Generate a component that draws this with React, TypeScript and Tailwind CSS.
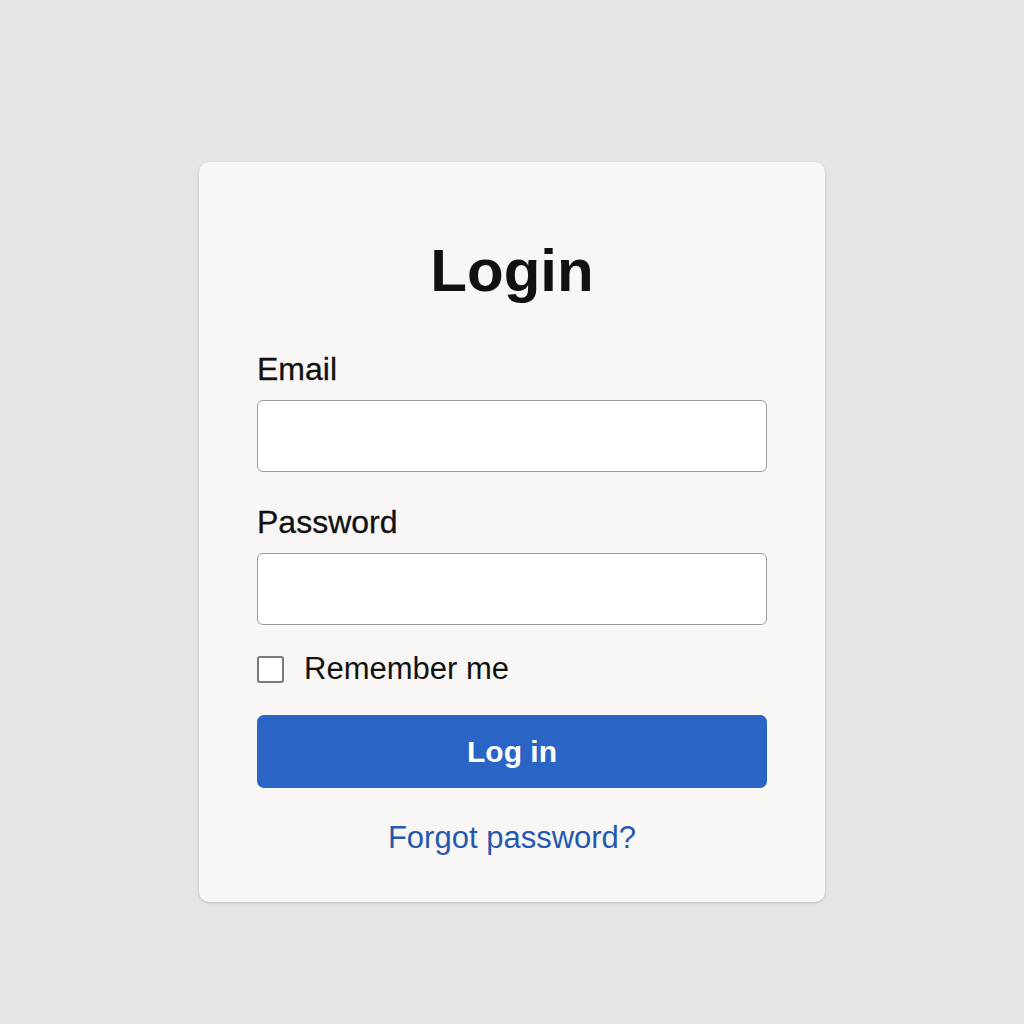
export default function App() {
  return (
    <div
      className="min-h-screen w-full bg-[#e6e5e3] flex justify-center pt-[162px]"
      style={{ fontFamily: '"Liberation Sans", Arial, sans-serif' }}
    >
      <div className="w-[626px] h-[740px] bg-[#f8f7f6] rounded-[10px] shadow-[0_1px_3px_rgba(0,0,0,0.18)] px-[58px] pt-[79px] flex flex-col">
        <h1 className="text-center text-[60px] leading-[60px] font-bold text-[#111]">Login</h1>

        <label className="mt-[50px] text-[32px] leading-[36px] text-[#111] [-webkit-text-stroke:0.3px_#111]">Email</label>
        <input
          type="email"
          className="mt-[13px] h-[72px] w-full bg-white border border-[#9a9a9a] rounded-[6px] px-4 text-[24px] outline-none"
        />

        <label className="mt-[32px] text-[32px] leading-[36px] text-[#111] [-webkit-text-stroke:0.3px_#111]">Password</label>
        <input
          type="password"
          className="mt-[13px] h-[72px] w-full bg-white border border-[#9a9a9a] rounded-[6px] px-4 text-[24px] outline-none"
        />

        <div className="mt-[27px] h-[34px] flex items-center gap-[20px]">
          <span className="w-[27px] h-[27px] border-2 border-[#7a7a7a] rounded-[3px] bg-white shrink-0" />
          <span className="text-[31px] leading-[34px] text-[#111]">Remember me</span>
        </div>

        <button className="mt-[29px] h-[73px] w-full bg-[#2a64c4] rounded-[7px] text-white text-[30px] font-bold">
          Log in
        </button>

        <a className="mt-[33px] text-center text-[31px] leading-[34px] text-[#2659ad]" href="#">
          Forgot password?
        </a>
      </div>
    </div>
  )
}
